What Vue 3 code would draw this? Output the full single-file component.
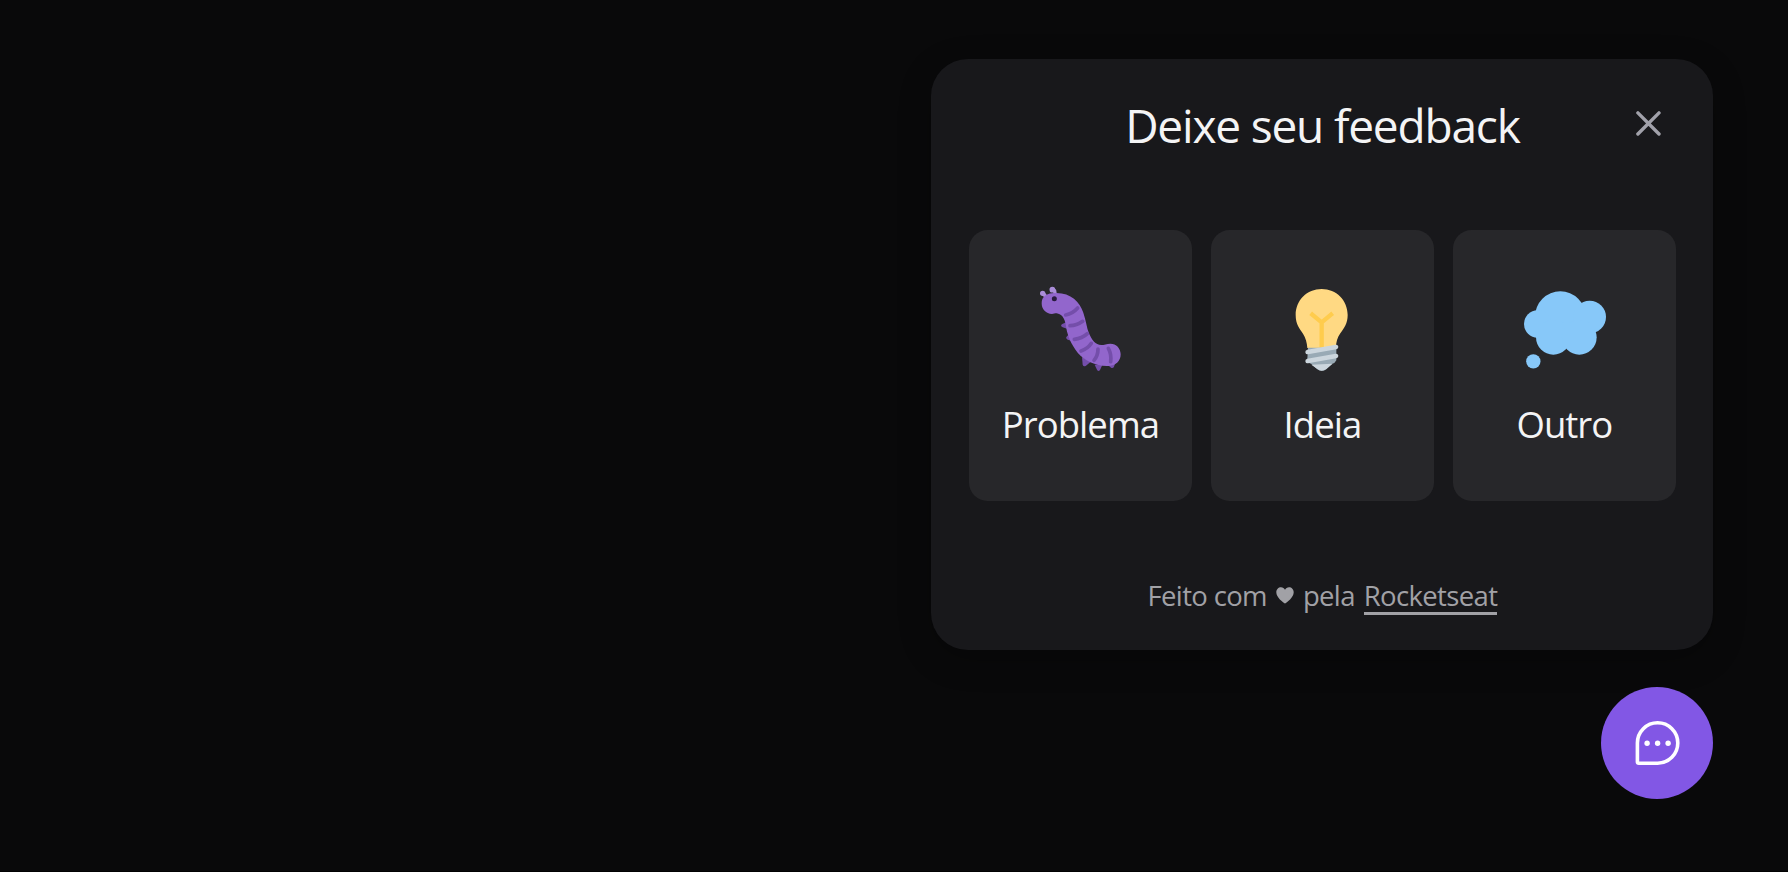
<script setup>
const options = [
  { id: 'bug', label: 'Problema' },
  { id: 'idea', label: 'Ideia' },
  { id: 'other', label: 'Outro' },
]
</script>

<template>
  <main class="page">
    <div class="widget">
      <section class="panel">
        <header class="header">
          <h1 class="title">Deixe seu feedback</h1>
          <button class="close" aria-label="Fechar">
            <svg width="25" height="25" viewBox="0 0 25 25" fill="none" stroke="currentColor" stroke-width="3.4" stroke-linecap="round">
              <path d="M1.9 1.9 23 23M23 1.9 1.9 23" />
            </svg>
          </button>
        </header>

        <div class="options">
          <button v-for="option in options" :key="option.id" class="option">
            <svg v-if="option.id === 'bug'" class="icon" viewBox="2 0 360 330">
              <g fill="#744eaa">
                <path d="M142 153 129 159Q121 164 130 169L145 174Z" />
                <path d="M150 189 143 196Q137 202 145 206L158 210Z" />
                <path d="M188 258 190 281Q193 289 200 284L216 271Z" />
                <path d="M226 281 233 296Q237 303 242 297L250 280Z" />
                <path d="M265 281 275 290Q281 293 284 287L288 275Z" />
              </g>
              <g fill="#aa8dd8" stroke="#aa8dd8" stroke-linecap="round">
                <circle cx="70" cy="67" r="8" stroke="none" />
                <path d="M72 68 79 76" stroke-width="11" />
                <circle cx="99" cy="56" r="8.5" stroke="none" />
                <path d="M101 54Q107 58 107 66" fill="none" stroke-width="10" />
              </g>
              <path fill="#9266cc" d="M98 129C80 129 67 115 67 97C67 78 80 69 98 67C150 61 180 90 192 125C200 148 202 170 209 187C218 208 228 222 246 222C254 222 262 218 273 218C291 218 304 232 304 250C304 270 290 284 268 285C232 287 195 268 175 245C155 220 145 195 141 172C138 150 133 130 112 127C107 127 102 129 98 129Z" />
              <g fill="none" stroke="#744eaa" stroke-width="11" stroke-linecap="round">
                <path d="M139 132Q160 128 175 111" />
                <path d="M152 164Q172 164 190 151" />
                <path d="M165 205Q188 203 204 188" />
                <path d="M185 240Q205 234 216 217" />
                <path d="M224 268Q236 254 236 234" />
                <path d="M267 232Q277 250 274 272" />
              </g>
              <circle cx="105" cy="83" r="7.5" fill="#281a3d" />
            </svg>

            <svg v-else-if="option.id === 'idea'" class="icon" viewBox="-22 0 360 330">
              <path fill="#ffd983" d="M235 132C235 88 201 54 157 54S79 88 79 132C79 160 91 173 101 188C109 201 113 215 114 231H200C200 214 204 200 213 187C224 172 235 158 235 132Z" />
              <path fill="none" stroke="#ffcc4d" stroke-width="13" stroke-linecap="square" stroke-linejoin="round" d="M129 131 157 154 185 131M157 156V224" />
              <path fill="#99aab5" d="M116 230H201V268Q198 276 187 279L171 295Q157 304 144 295L126 279Q114 276 114 264Z" />
              <g fill="none" stroke="#ccd6dd" stroke-width="14" stroke-linecap="round">
                <path d="M115 243 200 228" />
                <path d="M115 270 200 255" />
              </g>
              <path fill="#ccd6dd" d="M126 281 190 278 171 294Q157 304 144 294Z" />
            </svg>

            <svg v-else class="icon" viewBox="-16 0 360 330">
              <g fill="#87c8f9">
                <circle cx="153" cy="137" r="76" />
                <circle cx="241" cy="138" r="49" />
                <circle cx="85" cy="159" r="41" />
                <circle cx="132" cy="199" r="52" />
                <circle cx="210" cy="199" r="52" />
                <circle cx="72" cy="271" r="21.5" />
              </g>
            </svg>
            <span class="label">{{ option.label }}</span>
          </button>
        </div>

        <footer class="footer">
          <span>Feito com</span>
          <svg class="heart" width="18" height="17" viewBox="0 0 18 17">
            <path fill="currentColor" d="M9 16.6C7 15.3.3 10.7.3 5.3.3 2.4 2.4.3 5 .3 6.8.3 8.2 1.2 9 2.7 9.8 1.2 11.2.3 13 .3c2.6 0 4.7 2.1 4.7 5C17.7 10.7 11 15.3 9 16.6Z" />
          </svg>
          <span>pela</span>
          <a class="link">Rocketseat</a>
        </footer>
      </section>

      <button class="launcher" aria-label="Abrir feedback">
        <svg width="56" height="56" viewBox="0 0 56 56" fill="none">
          <path stroke="#fff" stroke-width="3.6" stroke-linejoin="round" d="M28.6 7.8A20.2 20.2 0 0 1 28.6 48.2H9.900Q8.400 48.200 8.400 46.700V28A20.200 20.200 0 0 1 28.600 7.800Z" />
          <g fill="#fff">
            <circle cx="18.1" cy="28.3" r="2.7" />
            <circle cx="28.6" cy="28.3" r="2.7" />
            <circle cx="39.1" cy="28.3" r="2.7" />
          </g>
        </svg>
      </button>
    </div>
  </main>
</template>

<style>
body {
  margin: 0;
  background: #09090a;
}
</style>

<style scoped>
.page {
  box-sizing: border-box;
  height: 872px;
  padding: 59px 74.6px 0 0;
  border-bottom: 1.5px solid #020202;
  background: #09090a;
  display: flex;
  justify-content: flex-end;
  align-items: flex-start;
  overflow: hidden;
  font-family: "Segoe UI", "Open Sans", "Noto Sans", sans-serif;
}

button {
  border: 0;
  padding: 0;
  background: none;
  font: inherit;
}

.widget {
  display: flex;
  flex-direction: column;
  align-items: flex-end;
  gap: 37.2px;
}

.panel {
  box-sizing: border-box;
  width: 782px;
  height: 590.6px;
  padding: 35px 37.3px 30px;
  border-radius: 37px;
  background: #18181b;
  box-shadow: 0 9px 32px rgba(0, 0, 0, 0.25);
  display: flex;
  flex-direction: column;
}

.header {
  display: grid;
  grid-template-columns: 1fr auto 1fr;
  align-items: start;
  flex: none;
  height: 65px;
}

.title {
  grid-column: 2;
  margin: 0;
  color: #f4f4f5;
  font-size: 46px;
  line-height: 62px;
  font-weight: 400;
  white-space: nowrap;
  letter-spacing: -1.18px;
}

.close {
  grid-column: 3;
  justify-self: end;
  display: flex;
  margin: 17.3px 15.5px 0 0;
  color: #a1a1aa;
}

.options {
  display: grid;
  grid-template-columns: repeat(3, 1fr);
  gap: 18.6px;
  margin-top: 71.3px;
}

.option {
  box-sizing: border-box;
  height: 270.4px;
  padding-top: 40.3px;
  border-radius: 18.6px;
  background: #27272a;
  display: flex;
  flex-direction: column;
  align-items: center;
}

.icon {
  width: 120px;
  height: 110px;
}

.label {
  margin-top: 17px;
  color: #f4f4f5;
  font-size: 36.5px;
  line-height: 52px;
  letter-spacing: -0.95px;
}

.footer {
  display: flex;
  align-items: center;
  justify-content: center;
  gap: 9px;
  margin-top: 76px;
  color: #a1a1a6;
  font-size: 27.5px;
  line-height: 38px;
  letter-spacing: -0.65px;
  white-space: nowrap;
}

.link {
  position: relative;
}

.link::after {
  content: "";
  position: absolute;
  left: 0;
  right: 0;
  bottom: 0;
  height: 2.5px;
  background: currentColor;
}

.launcher {
  width: 112px;
  height: 112px;
  border-radius: 50%;
  background: #8257e5;
  display: flex;
  align-items: center;
  justify-content: center;
}
</style>
